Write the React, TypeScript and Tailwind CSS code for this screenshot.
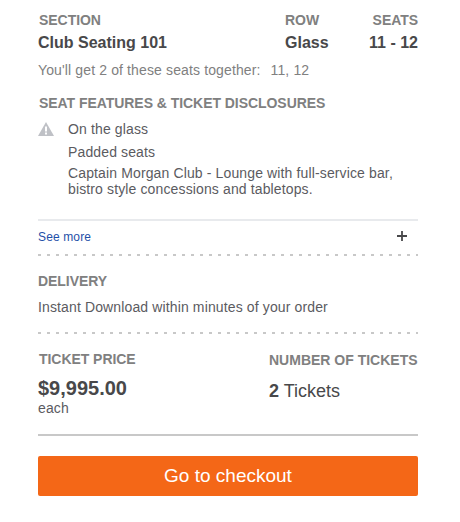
const dots = 'h-[2px] bg-[repeating-linear-gradient(90deg,#c8c8c8_0,#c8c8c8_3px,transparent_3px,transparent_9px)]';
const label = 'text-[14px] leading-[16px] font-bold text-[#808080] tracking-[-0.05px]';

export default function App() {
  return (
    <div className="w-[460px] h-[522px] bg-white pl-[38px] pr-[42px] pt-[12px] font-['Liberation_Sans',Arial,sans-serif] text-[14px] tracking-[0.13px] text-[#5b5b5f]">
      <div className="flex">
        <div className="flex-1">
          <div className={label + ' pl-[1px]'}>SECTION</div>
          <div className="mt-[6px] text-[16px] leading-[18px] font-bold tracking-normal text-[#48484a]">Club Seating 101</div>
        </div>
        <div className="w-[76px]">
          <div className={label}>ROW</div>
          <div className="mt-[6px] text-[16px] leading-[18px] font-bold tracking-normal text-[#48484a]">Glass</div>
        </div>
        <div className="w-[57px] text-right">
          <div className={label}>SEATS</div>
          <div className="mt-[6px] text-[16px] leading-[18px] font-bold tracking-normal text-[#48484a]">11 - 12</div>
        </div>
      </div>

      <div className="mt-[10px] flex leading-[16px] text-[#808080]">
        <span>You'll get 2 of these seats together:</span>
        <span className="ml-[10px]">11, 12</span>
      </div>

      <div className={label + ' mt-[17px] pl-[1px]'}>SEAT FEATURES &amp; TICKET DISCLOSURES</div>

      <div className="mt-[10px] flex">
        <svg width="16" height="14" viewBox="0 0 16 14" className="mt-[1px] shrink-0">
          <path d="M8 0 L16 14 H0 Z" fill="#bfc1c6" />
          <rect x="7" y="4.5" width="2" height="5" fill="#fff" />
          <rect x="7" y="10.5" width="2" height="2" fill="#fff" />
        </svg>
        <div className="ml-[14px] leading-[16px]">
          <div>On the glass</div>
          <div className="mt-[7px]">Padded seats</div>
          <div className="mt-[5px]">Captain Morgan Club - Lounge with full-service bar, bistro style concessions and tabletops.</div>
        </div>
      </div>

      <div className="mt-[22px] h-[2px] bg-[#e8eaed]" />
      <div className="flex h-[33px] items-center justify-between pr-[11px]">
        <a className="mb-[2px] text-[12px] text-[#1f4fa8]">See more</a>
        <svg width="10" height="10" viewBox="0 0 10 10" className="mb-[4px]">
          <path d="M5 0v10M0 5h10" stroke="#48484a" strokeWidth="1.8" />
        </svg>
      </div>
      <div className={dots} />

      <div className={label + ' mt-[17px]'}>DELIVERY</div>
      <div className="mt-[10px] leading-[16px]">Instant Download within minutes of your order</div>
      <div className={dots + ' mt-[17px]'} />

      <div className="mt-[17px] flex">
        <div className="w-[231px]">
          <div className={label + ' pl-[1px]'}>TICKET PRICE</div>
          <div className="mt-[10px] text-[20px] leading-[22px] font-bold tracking-normal text-[#48484a]">$9,995.00</div>
          <div className="mt-[1px] leading-[16px]">each</div>
        </div>
        <div className="mt-[1px]">
          <div className={label + ' tracking-normal'}>NUMBER OF TICKETS</div>
          <div className="mt-[13px] text-[18px] leading-[20px] tracking-normal text-[#48484a]"><b>2</b> Tickets</div>
        </div>
      </div>

      <div className="mt-[18px] h-[2px] bg-[#c8c8c8]" />
      <button className="mt-[20px] h-[40px] w-full rounded-[2px] bg-[#f46717] text-[19px] tracking-normal text-white">Go to checkout</button>
    </div>
  );
}
